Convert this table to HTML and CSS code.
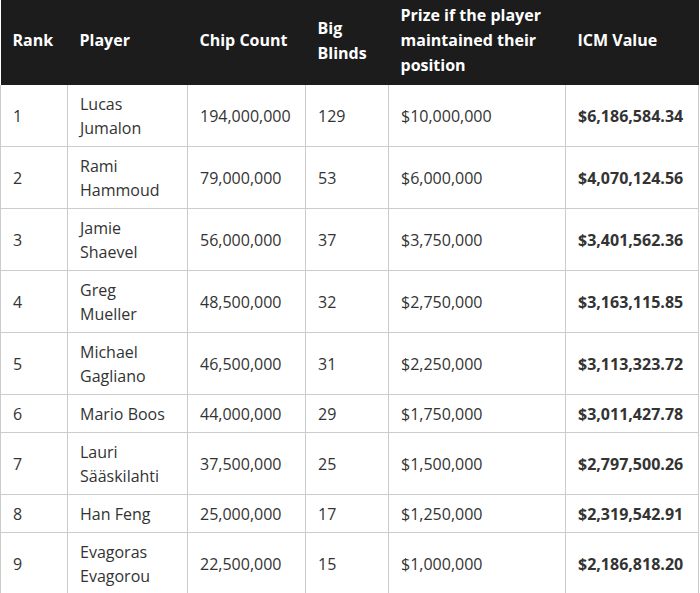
FILE: index.html
```html
<!DOCTYPE html>
<html lang="en">
<head>
<meta charset="utf-8">
<title>ICM Table</title>
<link rel="stylesheet" href="styles.css">
</head>
<body>
<table class="icm">
  <colgroup>
    <col class="c-rank">
    <col class="c-player">
    <col class="c-chips">
    <col class="c-bb">
    <col class="c-prize">
    <col class="c-icm">
  </colgroup>
  <thead>
    <tr>
      <th>Rank</th>
      <th>Player</th>
      <th>Chip Count</th>
      <th>Big Blinds</th>
      <th>Prize if the player maintained their position</th>
      <th>ICM Value</th>
    </tr>
  </thead>
  <tbody>
    <tr><td>1</td><td>Lucas Jumalon</td><td>194,000,000</td><td>129</td><td>$10,000,000</td><td class="val">$6,186,584.34</td></tr>
    <tr><td>2</td><td>Rami Hammoud</td><td>79,000,000</td><td>53</td><td>$6,000,000</td><td class="val">$4,070,124.56</td></tr>
    <tr><td>3</td><td>Jamie Shaevel</td><td>56,000,000</td><td>37</td><td>$3,750,000</td><td class="val">$3,401,562.36</td></tr>
    <tr><td>4</td><td>Greg Mueller</td><td>48,500,000</td><td>32</td><td>$2,750,000</td><td class="val">$3,163,115.85</td></tr>
    <tr><td>5</td><td>Michael Gagliano</td><td>46,500,000</td><td>31</td><td>$2,250,000</td><td class="val">$3,113,323.72</td></tr>
    <tr><td>6</td><td>Mario Boos</td><td>44,000,000</td><td>29</td><td>$1,750,000</td><td class="val">$3,011,427.78</td></tr>
    <tr><td>7</td><td>Lauri Sääskilahti</td><td>37,500,000</td><td>25</td><td>$1,500,000</td><td class="val">$2,797,500.26</td></tr>
    <tr><td>8</td><td>Han Feng</td><td>25,000,000</td><td>17</td><td>$1,250,000</td><td class="val">$2,319,542.91</td></tr>
    <tr><td>9</td><td>Evagoras Evagorou</td><td>22,500,000</td><td>15</td><td>$1,000,000</td><td class="val">$2,186,818.20</td></tr>
  </tbody>
</table>
</body>
</html>
```
FILE: styles.css
```css
html, body {
  margin: 0;
  padding: 0;
  background: #ffffff;
}

body {
  font-family: "Open Sans", "Liberation Sans", sans-serif;
  font-size: 16px;
  line-height: 24px;
  color: #333333;
}

.icm {
  width: 699px;
  border-collapse: collapse;
  table-layout: fixed;
}

.c-rank { width: 67px; }
.c-player { width: 120px; }
.c-chips { width: 118px; }
.c-bb { width: 83px; }
.c-prize { width: 177px; }
.c-icm { width: 133px; }

.icm th {
  background: #1c1c1c;
  color: #ffffff;
  font-weight: 700;
  line-height: 25px;
  text-align: left;
  vertical-align: middle;
  padding: 3px 12px 7px 12px;
  border: none;
}

.icm td {
  text-align: left;
  vertical-align: middle;
  padding: 7px 12px 6px 12px;
  border: 1px solid #cccccc;
  border-top: none;
}

.icm td.val {
  font-weight: 700;
}
```
